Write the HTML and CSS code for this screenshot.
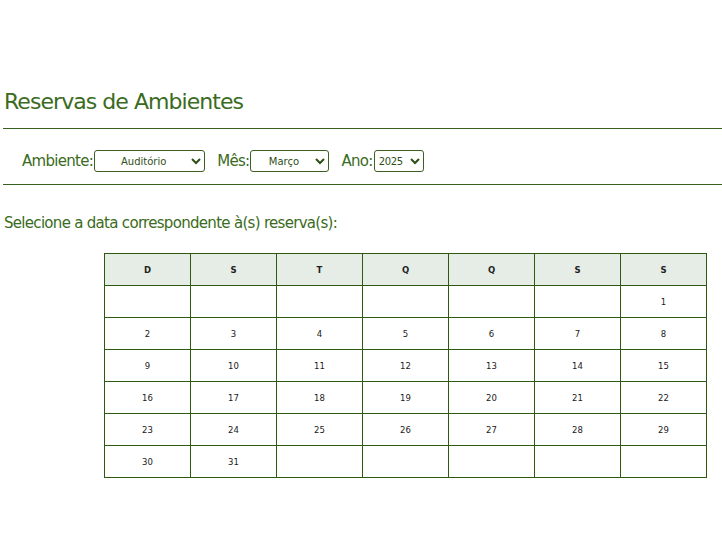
FILE: index.html
```html
<!DOCTYPE html>
<html lang="pt-BR">
<head>
<meta charset="utf-8">
<title>Reservas de Ambientes</title>
<link rel="stylesheet" href="styles.css">
</head>
<body>
<main class="page">
  <h1 class="title">Reservas de Ambientes</h1>
  <hr class="rule">
  <form class="filters">
    <label class="field">Ambiente:<select class="sel sel-amb"><option>Auditório</option></select></label>
    <label class="field">Mês:<select class="sel sel-mes"><option>Março</option></select></label>
    <label class="field">Ano:<select class="sel sel-ano"><option>2025</option></select></label>
  </form>
  <hr class="rule">
  <p class="hint">Selecione a data correspondente à(s) reserva(s):</p>
  <table class="cal">
    <thead>
      <tr><th>D</th><th>S</th><th>T</th><th>Q</th><th>Q</th><th>S</th><th>S</th></tr>
    </thead>
    <tbody>
      <tr><td></td><td></td><td></td><td></td><td></td><td></td><td>1</td></tr>
      <tr><td>2</td><td>3</td><td>4</td><td>5</td><td>6</td><td>7</td><td>8</td></tr>
      <tr><td>9</td><td>10</td><td>11</td><td>12</td><td>13</td><td>14</td><td>15</td></tr>
      <tr><td>16</td><td>17</td><td>18</td><td>19</td><td>20</td><td>21</td><td>22</td></tr>
      <tr><td>23</td><td>24</td><td>25</td><td>26</td><td>27</td><td>28</td><td>29</td></tr>
      <tr><td>30</td><td>31</td><td></td><td></td><td></td><td></td><td></td></tr>
    </tbody>
  </table>
</main>
</body>
</html>
```

FILE: styles.css
```css
html, body {
  margin: 0;
  padding: 0;
  background: #ffffff;
}
body {
  font-family: "DejaVu Sans", Verdana, sans-serif;
  color: #3a6b22;
}
.page {
  padding: 88px 0 0 3px;
}
.title {
  margin: 0 0 0 1px;
  font-weight: normal;
  font-size: 22px;
  line-height: 28px;
  letter-spacing: -0.95px;
  color: #3a6b22;
}
.rule {
  border: 0;
  border-top: 1px solid #36621d;
  margin: 12px 0 0 0;
  height: 0;
}
.filters {
  display: flex;
  align-items: center;
  gap: 12px;
  padding: 21px 0 12px 19px;
}
.field {
  display: flex;
  align-items: center;
  gap: 1px;
  font-size: 15px;
  letter-spacing: -0.7px;
  color: #3a6b22;
}
.sel {
  height: 22px;
  border: 1px solid #3e5e22;
  border-radius: 3px;
  background: #fff;
  color: #2f4f17;
  font-family: "DejaVu Sans", Verdana, sans-serif;
  font-size: 10px;
  letter-spacing: 0;
  text-align: center;
  text-align-last: center;
  padding: 0 2px;
}
.sel-amb { width: 111px; }
.sel-mes { width: 79px; }
.sel-ano {
  width: 50px;
  padding: 0;
  letter-spacing: -0.3px;
  text-align: left;
  text-align-last: left;
}
.filters + .rule { margin-top: 0; }
.hint {
  margin: 28px 0 0 1px;
  font-size: 15px;
  letter-spacing: -0.7px;
  line-height: 20px;
  color: #3a6b22;
}
.cal {
  border-collapse: collapse;
  margin: 20px 0 0 101px;
  width: 603px;
  table-layout: fixed;
}
.cal th, .cal td {
  border: 1px solid #2e5a10;
  height: 31px;
  padding: 0;
  text-align: center;
  font-size: 8.5px;
  color: #1a1a1a;
}
.cal th {
  background: #e6ede6;
  font-weight: bold;
  color: #222;
}
```
